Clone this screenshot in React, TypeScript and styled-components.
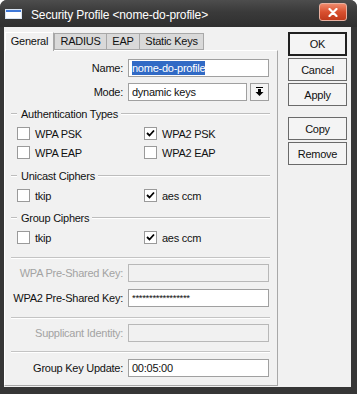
import styled, { createGlobalStyle } from 'styled-components';

const GlobalStyle = createGlobalStyle`
  body {
    margin: 0;
    background: #ffffff;
    font-family: "Liberation Sans", Arial, sans-serif;
  }
`;

const Window = styled.div`
  width: 357px;
  height: 394px;
  display: flex;
  flex-direction: column;
  background: #363636;
  border-radius: 7px 7px 0 0;
  overflow: hidden;
`;

const TitleBar = styled.div`
  height: 27px;
  flex: none;
  display: flex;
  align-items: center;
  padding: 0 10px 0 5px;
  background: linear-gradient(#4d4d4d, #3a3a3a 45%, #2f2f2f);
  color: #ffffff;
`;

const Title = styled.span`
  margin: 3px 0 0 9px;
  font-size: 12px;
  letter-spacing: -0.15px;
  flex: 1;
`;

const CloseButton = styled.div`
  width: 26px;
  height: 16px;
  margin-top: -3px;
  display: flex;
  align-items: center;
  justify-content: center;
  border-radius: 3px;
  border: 1px solid #e9b0a0;
  background: linear-gradient(#f08a6c, #d9502f 50%, #c13a1c);
`;

const Body = styled.div`
  flex: 1;
  display: flex;
  margin: 0 6px 7px 4px;
  background: #f1f1f1;
  font-size: 11px;
  letter-spacing: -0.25px;
  color: #111111;
`;

const LeftColumn = styled.div`
  width: 274px;
  display: flex;
  flex-direction: column;
  padding-top: 5px;
`;

const TabBar = styled.div`
  height: 18px;
  display: flex;
  align-items: flex-end;
  padding-left: 1px;
  position: relative;
  z-index: 1;
`;

const Tab = styled.div<{ $active?: boolean; $width: number }>`
  box-sizing: border-box;
  width: ${(p) => p.$width}px;
  height: ${(p) => (p.$active ? '19px' : '17px')};
  margin-bottom: ${(p) => (p.$active ? '-1px' : '0')};
  margin-right: ${(p) => (p.$active ? '1px' : '0')};
  padding-top: ${(p) => (p.$active ? '2px' : '1px')};
  text-align: center;
  border: 1px solid #a8a8a8;
  border-bottom: ${(p) => (p.$active ? 'none' : '1px solid #a8a8a8')};
  border-left-color: ${(p) => (p.$active ? '#ffffff' : '#a8a8a8')};
  border-top-color: ${(p) => (p.$active ? '#ffffff' : '#a8a8a8')};
  background: ${(p) => (p.$active ? '#f1f1f1' : '#d9d9d9')};
  & + & {
    margin-left: -1px;
  }
`;

const Panel = styled.div`
  flex: 1;
  margin-bottom: 1px;
  display: flex;
  flex-direction: column;
  border: 1px solid #a8a8a8;
  border-left-color: #ffffff;
  border-top-color: #ffffff;
`;

const FormRow = styled.div<{ $top: number }>`
  display: flex;
  align-items: center;
  height: 18px;
  margin-top: ${(p) => p.$top}px;
`;

const Label = styled.span<{ $disabled?: boolean }>`
  width: 118px;
  margin-right: 5px;
  text-align: right;
  white-space: nowrap;
  color: ${(p) => (p.$disabled ? '#a3a3a3' : '#111111')};
`;

const Field = styled.div<{ $width?: number; $disabled?: boolean }>`
  box-sizing: border-box;
  width: ${(p) => p.$width ?? 141}px;
  height: 18px;
  padding: 0 3px;
  display: flex;
  align-items: center;
  border: 1px solid ${(p) => (p.$disabled ? '#b8b8b8' : '#a0a0a0')};
  background: ${(p) => (p.$disabled ? '#f1f1f1' : '#ffffff')};
  white-space: nowrap;
  overflow: hidden;
`;

const Selected = styled.span`
  background: #316ac5;
  color: #ffffff;
  line-height: 14px;
`;

const Masked = styled.span`
  font-size: 9.5px;
  letter-spacing: -0.3px;
  margin-top: -2px;
`;

const DropButton = styled.div`
  box-sizing: border-box;
  width: 19px;
  height: 18px;
  margin-left: 3px;
  display: flex;
  align-items: center;
  justify-content: center;
  border: 1px solid #a0a0a0;
  background: #f4f4f4;
`;

const GroupHeading = styled.div<{ $top: number }>`
  display: flex;
  align-items: center;
  height: 14px;
  margin-top: ${(p) => p.$top}px;
  padding: 0 7px 0 6px;
  &::before,
  &::after {
    content: '';
    height: 0;
    border-top: 1px solid #bdbdbd;
    border-bottom: 1px solid #ffffff;
  }
  &::before {
    width: 6px;
    margin-right: 4px;
  }
  &::after {
    flex: 1;
    margin-left: 3px;
  }
`;

const CheckGrid = styled.div`
  display: grid;
  grid-template-columns: 127px 1fr;
  grid-auto-rows: 19px;
  margin-top: 3px;
  padding-left: 12px;
`;

const CheckItem = styled.div`
  display: flex;
  align-items: center;
  gap: 5px;
`;

const Box = styled.div`
  box-sizing: border-box;
  width: 13px;
  height: 13px;
  display: flex;
  align-items: center;
  justify-content: center;
  border: 1px solid #9a9a9a;
  background: #ffffff;
`;

const Separator = styled.div<{ $top: number }>`
  margin: ${(p) => p.$top}px 7px 0 6px;
  border-top: 1px solid #c4c4c4;
  border-bottom: 1px solid #ffffff;
`;

const RightColumn = styled.div`
  width: 59px;
  margin-left: 10px;
  padding-top: 5px;
  display: flex;
  flex-direction: column;
  gap: 2px;
`;

const Button = styled.div<{ $default?: boolean; $gapBefore?: boolean }>`
  box-sizing: border-box;
  height: ${(p) => (p.$default ? 24 : 23)}px;
  margin-top: ${(p) => (p.$gapBefore ? 9 : 0)}px;
  display: flex;
  align-items: center;
  justify-content: center;
  border: ${(p) => (p.$default ? '2px solid #202020' : '1px solid #6a6a6a')};
  background: #f4f4f4;
`;

const WindowIcon = () => (
  <svg width='17' height='10' viewBox='0 0 17 10'>
    <rect x='0.5' y='0.5' width='16' height='9' fill='#ffffff' stroke='#d8e4f4' />
    <rect x='1' y='1' width='15' height='2' fill='#3f78d8' />
  </svg>
);

const CloseIcon = () => (
  <svg width='10' height='9' viewBox='0 0 10 9'>
    <path d='M1.5 1 L8.5 8 M8.5 1 L1.5 8' stroke='#ffffff' strokeWidth='2.2' strokeLinecap='round' />
  </svg>
);

const DropIcon = () => (
  <svg width='9' height='10' viewBox='0 0 9 10'>
    <rect x='1' y='0' width='7' height='1' fill='#000' />
    <rect x='3' y='2' width='3' height='3' fill='#000' />
    <path d='M0.5 5 L8.5 5 L4.5 9 Z' fill='#000' />
  </svg>
);

const Tick = () => (
  <svg width='9' height='9' viewBox='0 0 9 9'>
    <path d='M1 4 L3.5 6.5 L8 1.5' stroke='#000' strokeWidth='1.8' fill='none' />
  </svg>
);

const Check = ({ label, checked }: { label: string; checked?: boolean }) => (
  <CheckItem>
    <Box>{checked && <Tick />}</Box>
    <span>{label}</span>
  </CheckItem>
);

export default function App() {
  return (
    <>
      <GlobalStyle />
      <Window>
        <TitleBar>
          <WindowIcon />
          <Title>Security Profile &lt;nome-do-profile&gt;</Title>
          <CloseButton>
            <CloseIcon />
          </CloseButton>
        </TitleBar>
        <Body>
          <LeftColumn>
            <TabBar>
              <Tab $active $width={49}>General</Tab>
              <Tab $width={53}>RADIUS</Tab>
              <Tab $width={34}>EAP</Tab>
              <Tab $width={65}>Static Keys</Tab>
            </TabBar>
            <Panel>
              <FormRow $top={8}>
                <Label>Name:</Label>
                <Field>
                  <Selected>nome-do-profile</Selected>
                </Field>
              </FormRow>
              <FormRow $top={6}>
                <Label>Mode:</Label>
                <Field $width={119}>dynamic keys</Field>
                <DropButton>
                  <DropIcon />
                </DropButton>
              </FormRow>

              <GroupHeading $top={6}>Authentication Types</GroupHeading>
              <CheckGrid>
                <Check label='WPA PSK' />
                <Check label='WPA2 PSK' checked />
                <Check label='WPA EAP' />
                <Check label='WPA2 EAP' />
              </CheckGrid>

              <GroupHeading $top={7}>Unicast Ciphers</GroupHeading>
              <CheckGrid>
                <Check label='tkip' />
                <Check label='aes ccm' checked />
              </CheckGrid>

              <GroupHeading $top={6}>Group Ciphers</GroupHeading>
              <CheckGrid>
                <Check label='tkip' />
                <Check label='aes ccm' checked />
              </CheckGrid>

              <Separator $top={10} />
              <FormRow $top={5}>
                <Label $disabled>WPA Pre-Shared Key:</Label>
                <Field $disabled />
              </FormRow>
              <FormRow $top={7}>
                <Label>WPA2 Pre-Shared Key:</Label>
                <Field>
                  <Masked>*****************</Masked>
                </Field>
              </FormRow>

              <Separator $top={10} />
              <FormRow $top={5}>
                <Label $disabled>Supplicant Identity:</Label>
                <Field $disabled />
              </FormRow>

              <Separator $top={9} />
              <FormRow $top={6}>
                <Label>Group Key Update:</Label>
                <Field>00:05:00</Field>
              </FormRow>
            </Panel>
          </LeftColumn>
          <RightColumn>
            <Button $default>OK</Button>
            <Button>Cancel</Button>
            <Button>Apply</Button>
            <Button $gapBefore>Copy</Button>
            <Button>Remove</Button>
          </RightColumn>
        </Body>
      </Window>
    </>
  );
}
